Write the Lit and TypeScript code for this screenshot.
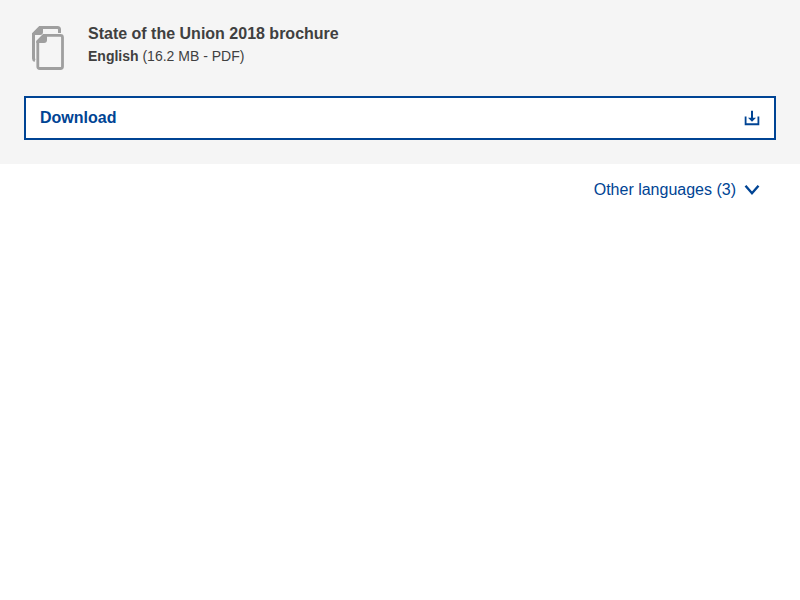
import { LitElement, html, css } from "lit";
import { customElement } from "lit/decorators.js";

@customElement("app-root")
export class AppRoot extends LitElement {
  static styles = css`
    :host {
      display: block;
      font-family: "Liberation Sans", Arial, sans-serif;
      font-size: 16px;
      line-height: 24px;
      color: #404040;
      background: #fff;
    }
    * { box-sizing: border-box; }
    svg { display: block; flex: none; }
    .file { background: #f5f5f5; padding: 24px; }
    .summary { display: flex; gap: 16px; height: 48px; margin-bottom: 24px; }
    .info { margin-top: -2px; }
    .title { font-weight: 700; }
    .meta { font-size: 14px; line-height: 20px; }
    .download {
      display: flex;
      align-items: center;
      justify-content: space-between;
      height: 44px;
      padding: 0 14px;
      border: 2px solid #004494;
      background: #fff;
      color: #004494;
      font-weight: 700;
      text-decoration: none;
    }
    .languages {
      display: flex;
      align-items: center;
      justify-content: flex-end;
      gap: 8px;
      padding: 14px 40px;
      color: #004494;
    }
  `;

  render() {
    return html`
      <section class="file">
        <div class="summary">
          <svg width="48" height="48" viewBox="0 0 48 48" fill="none" stroke="#9f9f9f">
            <path stroke-width="3" d="M11 36.5Q9.5 36 9.5 34.5V10L16 3.5H33.5Q35.5 3.5 35.5 5.5V9" />
            <path fill="#9f9f9f" stroke="none" d="M8 9.5 15.5 2H19V8Q19 11 16 11H8Z" />
            <path stroke-width="2.8" d="M13.8 17.5 19.8 11.4H36.5Q38.5 11.4 38.5 13.4V42.5Q38.5 44.5 36.5 44.5H15.8Q13.8 44.5 13.8 42.5Z" />
            <path fill="#9f9f9f" stroke="none" d="M12.4 17 19.3 10H23V16Q23 19 20 19H12.4Z" />
          </svg>
          <div class="info">
            <div class="title">State of the Union 2018 brochure</div>
            <div class="meta"><strong>English</strong> (16.2 MB - PDF)</div>
          </div>
        </div>
        <a class="download">
          Download
          <svg width="16" height="16" viewBox="0 0 16 16" fill="#004494">
            <path d="M7 .7H9V7.7H12L8 11.7 4 7.7H7ZM.7 6.5H2.5V13.2H13.5V6.5H15.3V15.2H.7Z" />
          </svg>
        </a>
      </section>
      <div class="languages">
        Other languages (3)
        <svg width="16" height="16" viewBox="0 0 16 16" fill="none" stroke="#004494">
          <path stroke-width="2.4" d="M1.5 3.8 8 11.2 14.5 3.8" />
        </svg>
      </div>
    `;
  }
}
